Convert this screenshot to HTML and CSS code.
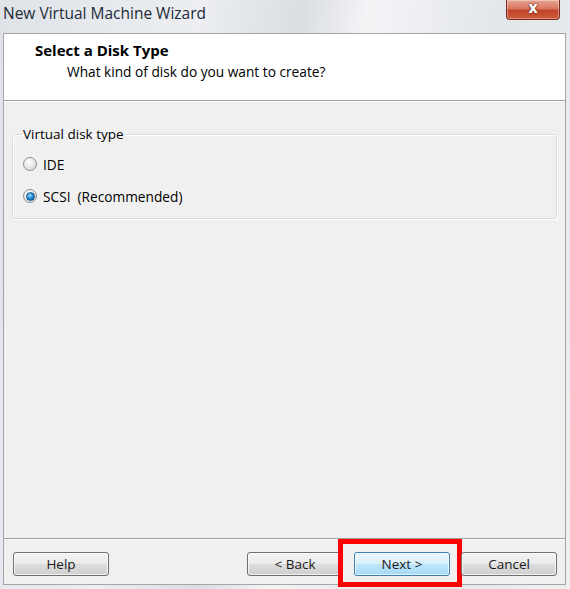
FILE: index.html
```html
<!DOCTYPE html>
<html>
<head>
<meta charset="utf-8">
<link rel="stylesheet" href="styles.css">
</head>
<body>
<div class="window">
  <div class="titlebar">
    <span class="title">New Virtual Machine Wizard</span>
    <span class="close">x</span>
  </div>
  <div class="client">
    <div class="header">
      <div class="h-title">Select a Disk Type</div>
      <div class="h-sub">What kind of disk do you want to create?</div>
    </div>
    <div class="body">
      <fieldset class="group">
        <legend>Virtual disk type</legend>
        <label class="radio"><span class="dot"></span>IDE</label>
        <label class="radio"><span class="dot on"></span>SCSI&nbsp;&nbsp;(Recommended)</label>
      </fieldset>
    </div>
    <div class="footer">
      <button class="btn">Help</button>
      <div class="spacer"></div>
      <button class="btn">&lt; Back</button>
      <button class="btn default">Next &gt;<span class="highlight"></span></button>
      <button class="btn">Cancel</button>
    </div>
  </div>
</div>
</body>
</html>
```

FILE: styles.css
```css
* { box-sizing: border-box; }
html, body { margin: 0; padding: 0; }
body {
  width: 570px; height: 589px; overflow: hidden;
  font-family: "Open Sans", "Noto Sans", sans-serif;
  color: #000;
}
.window {
  width: 570px; height: 589px;
  background: linear-gradient(100deg, #dfe3e8 0%, #eceef1 30%, #dadde2 45%, #f3f4f6 55%, #e3e6ea 75%, #eef0f2 100%);
  display: flex; flex-direction: column;
  padding: 0 4px 4px 3px;
}
.titlebar {
  height: 33px; flex: none;
  display: flex; align-items: flex-start; justify-content: space-between;
}
.title {
  font-size: 15.5px; color: #1e2a3a;
  margin-top: 2px; margin-left: 0;
}
.close {
  width: 54px; height: 20px; margin-right: 6px;
  border: 1px solid #7b2a1d; border-top: none;
  border-radius: 0 0 4px 4px;
  background: linear-gradient(#e7a593 0%, #d9765f 45%, #c2442b 55%, #cc5a3c 100%);
  color: #fff; font: bold 15px/16px "DejaVu Sans", sans-serif;
  text-align: center;
  padding-top: 0;
  text-shadow: 0 0 2px #5a1a10, 0 0 1px #5a1a10;
  box-shadow: inset 0 0 0 1px rgba(255,255,255,0.35);
}
.client {
  flex: 1;
  border: 1px solid #a5a5a5;
  background: #f0f0f0;
  display: flex; flex-direction: column;
  position: relative;
}
.header {
  height: 67px; flex: none;
  background: #fff;
  border-bottom: 1px solid #a0a0a0;
  box-shadow: 0 1px 0 #fff;
  padding: 7px 0 0 31px;
}
.h-title { font-weight: bold; font-size: 15px; line-height: 19px; }
.h-sub { font-size: 13.7px; line-height: 19px; margin-top: 2px; padding-left: 32px; }
.body { flex: 1; padding: 24px 8px 0 8px; }
.group {
  margin: 0; padding: 10px 10px 0 10px;
  height: 94px;
  border: 1px solid #d5dfe5; border-radius: 3px;
  box-shadow: inset 1px 1px 0 #fff, 1px 1px 0 #fff;
}
.group legend {
  font-size: 13.5px; padding: 0 1px; margin-left: -1px;
}
.radio {
  display: flex; align-items: center;
  font-size: 13.7px; height: 16px; margin-top: 0;
}
.radio + .radio { margin-top: 16px; }
.group .radio:first-of-type { margin-top: 3px; }
.dot {
  width: 14px; height: 14px; border-radius: 50%;
  border: 1px solid #8e8f8f;
  background: radial-gradient(circle at 40% 35%, #fdfdfd 0%, #e6e6e6 55%, #cfcfcf 100%);
  margin-right: 6px; flex: none;
  display: flex; align-items: center; justify-content: center;
}
.dot.on::after {
  content: ""; width: 7px; height: 7px; border-radius: 50%;
  background: radial-gradient(circle at 40% 35%, #9fe1ff 0%, #1f8dd6 50%, #0e4f87 100%);
  border: 1px solid #1c5180;
}
.footer {
  height: 46px; flex: none;
  border-top: 1px solid #a0a0a0;
  box-shadow: inset 0 1px 0 #fff;
  display: flex; align-items: flex-start;
  padding: 13px 8px 0 9px;
  gap: 11px;
}
.spacer { flex: 1; }
.btn {
  position: relative;
  width: 96px; height: 24px;
  font-family: "Open Sans", "Noto Sans", sans-serif;
  font-size: 13.5px; color: #1a1a1a;
  border: 1px solid #707070; border-radius: 3px;
  background: linear-gradient(#f2f2f2 0%, #ebebeb 50%, #dddddd 51%, #cfcfcf 100%);
  box-shadow: inset 0 0 0 1px rgba(255,255,255,0.7);
  padding: 0; line-height: 20px;
}
.btn.default {
  border-color: #3c7fb1;
  background: linear-gradient(#eaf6fd 0%, #d9f0fc 50%, #bee6fd 51%, #a7d9f5 100%);
}
.highlight {
  position: absolute;
  left: -17px; top: -14px;
  width: 124px; height: 48px;
  border: 5px solid #ff0000;
  pointer-events: none;
}
```
